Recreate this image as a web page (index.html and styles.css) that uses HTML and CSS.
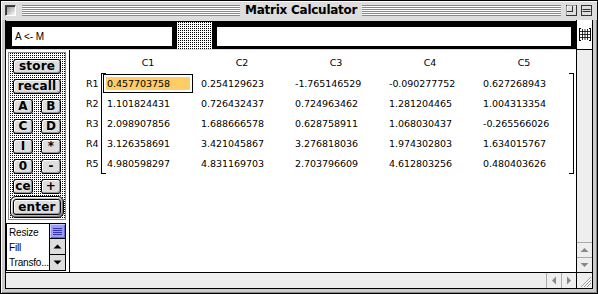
FILE: index.html
```html
<!DOCTYPE html>
<html>
<head>
<meta charset="utf-8">
<link rel="stylesheet" href="styles.css">
</head>
<body>
<div class="window">
  <div class="titlebar">
    <span class="closebox"></span>
    <span class="stripes stripes-left"></span>
    <span class="title">Matrix Calculator</span>
    <span class="stripes stripes-right"></span>
    <svg class="wbox" width="11" height="11" viewBox="0 0 11 11"><rect x="0.5" y="0.5" width="10" height="10" fill="#ddd" stroke="#333"/><path d="M1 1h9M1 1v9" stroke="#fff"/><path d="M6.5 1v6M1 6.5h6" stroke="#333"/></svg>
    <svg class="wbox wbox-last" width="11" height="11" viewBox="0 0 11 11"><rect x="0.5" y="0.5" width="10" height="10" fill="#ddd" stroke="#333"/><path d="M1.5 4.5h8M1.5 6.5h8" stroke="#333"/></svg>
  </div>
  <div class="body">
    <div class="topbar">
      <div class="field field-cmd">A &lt;- M</div>
      <div class="sep"></div>
      <div class="field field-out"></div>
    </div>
    <div class="iconcell">
      <svg width="12" height="13" viewBox="0 0 12 13"><path d="M0.5 0v13M11.5 0v13M0 0.5h2M0 12.5h2M10 0.5h2M10 12.5h2" stroke="#000"/><path d="M3.5 1v11M6 1v11M8.5 1v11M1 3.5h10M1 6.5h10M1 9.5h10" stroke="#000" stroke-width="0.8"/></svg>
    </div>
    <div class="left">
      <div class="keys">
        <div class="key">store</div>
        <div class="key">recall</div>
        <div class="pair"><div class="key small">A</div><div class="key small">B</div></div>
        <div class="pair"><div class="key small">C</div><div class="key small">D</div></div>
        <div class="pair"><div class="key small">I</div><div class="key small">*</div></div>
        <div class="pair"><div class="key small">0</div><div class="key small">-</div></div>
        <div class="pair"><div class="key small">ce</div><div class="key small">+</div></div>
        <div class="ring"><div class="key key-enter">enter</div></div>
      </div>
      <div class="list">
        <div class="items">
          <div class="item">Resize</div>
          <div class="item">Fill</div>
          <div class="item">Transfo...</div>
        </div>
        <div class="lscroll">
          <div class="thumb"><svg width="9" height="9" viewBox="0 0 9 9"><path d="M0 1.5h9M0 3.5h9M0 5.5h9M0 7.5h9" stroke="#3333aa"/></svg></div>
          <div class="larrow"><svg width="9" height="5" viewBox="0 0 9 5"><polygon points="0.5,4.5 8.5,4.5 4.5,0.5" fill="#000"/></svg></div>
          <div class="larrow"><svg width="9" height="5" viewBox="0 0 9 5"><polygon points="0.5,0.5 8.5,0.5 4.5,4.5" fill="#000"/></svg></div>
        </div>
      </div>
    </div>
    <div class="matrix">
      <div class="hdr">
        <span>C1</span><span>C2</span><span>C3</span><span>C4</span><span>C5</span>
      </div>
      <div class="mrow">
        <div class="labels">
          <div>R1</div><div>R2</div><div>R3</div><div>R4</div><div>R5</div>
        </div>
        <div class="bracket">
          <div class="cell sel"><div class="hl"><span>0.457703758</span></div></div>
          <div class="cell">0.254129623</div>
          <div class="cell">-1.765146529</div>
          <div class="cell">-0.090277752</div>
          <div class="cell">0.627268943</div>
          <div class="cell">1.101824431</div>
          <div class="cell">0.726432437</div>
          <div class="cell">0.724963462</div>
          <div class="cell">1.281204465</div>
          <div class="cell">1.004313354</div>
          <div class="cell">2.098907856</div>
          <div class="cell">1.688666578</div>
          <div class="cell">0.628758911</div>
          <div class="cell">1.068030437</div>
          <div class="cell">-0.265566026</div>
          <div class="cell">3.126358691</div>
          <div class="cell">3.421045867</div>
          <div class="cell">3.276818036</div>
          <div class="cell">1.974302803</div>
          <div class="cell">1.634015767</div>
          <div class="cell">4.980598297</div>
          <div class="cell">4.831169703</div>
          <div class="cell">2.703796609</div>
          <div class="cell">4.612803256</div>
          <div class="cell">0.480403626</div>
        </div>
      </div>
    </div>
    <div class="vscroll">
      <div class="track"></div>
      <div class="sarrow"><svg width="15" height="14" viewBox="0 0 15 14"><polygon points="3.5,9 11.5,9 7.5,5" fill="#888"/></svg></div>
      <div class="sarrow"><svg width="15" height="14" viewBox="0 0 15 14"><polygon points="3.5,5 11.5,5 7.5,9" fill="#888"/></svg></div>
    </div>
    <div class="hscroll">
      <div class="track"></div>
      <div class="harrow"><svg width="14" height="15" viewBox="0 0 14 15"><polygon points="9,3.5 9,11.5 5,7.5" fill="#888"/></svg></div>
      <div class="harrow"><svg width="14" height="15" viewBox="0 0 14 15"><polygon points="5,3.5 5,11.5 9,7.5" fill="#888"/></svg></div>
    </div>
    <div class="grow">
      <svg width="15" height="15" viewBox="0 0 15 15"><path d="M4 14L14 4M7 14L14 7M10 14L14 10" stroke="#999"/><path d="M5 14L14 5M8 14L14 8M11 14L14 11" stroke="#fff"/></svg>
    </div>
  </div>
</div>
</body>
</html>
```

FILE: styles.css
```css
html, body {
  margin: 0;
  padding: 0;
  background: #fff;
}

.window {
  width: 598px;
  height: 294px;
  box-sizing: border-box;
  border: 1px solid #000;
  background: #ccc;
  box-shadow: inset 1px 1px #fff, inset -1px -1px #888;
  display: flex;
  flex-direction: column;
  font-family: "DejaVu Sans", sans-serif;
  color: #000;
}

/* ---------- title bar ---------- */
.titlebar {
  height: 19px;
  flex: none;
  display: flex;
  align-items: center;
  padding: 0 5px 0 4px;
  background: #ddd;
  box-shadow: inset 0 1px #fff, inset 1px 0 #fff;
}

.closebox {
  width: 11px;
  height: 11px;
  box-sizing: border-box;
  border: 1px solid #444;
  border-right-color: #fff;
  border-bottom-color: #fff;
  background: linear-gradient(135deg, #888 0%, #bbb 45%, #fff 100%);
  box-shadow: inset 1px 1px #333;
  flex: none;
}

.stripes {
  height: 11px;
  background: repeating-linear-gradient(to bottom, #888 0 1px, #fff 1px 2px);
}

.stripes-left {
  width: 218px;
  margin-left: 6px;
  flex: none;
}

.stripes-right {
  flex: 1;
  margin-right: 5px;
}

.title {
  font-weight: bold;
  font-size: 12px;
  letter-spacing: -0.25px;
  padding: 0 5px;
  white-space: nowrap;
  line-height: 19px;
}

.wbox {
  display: block;
  flex: none;
}

.wbox-last {
  margin-left: 4px;
}

/* ---------- body grid ---------- */
.body {
  flex: 1;
  margin: 0 4px 4px;
  border: 1px solid #000;
  border-top: 0;
  display: grid;
  grid-template-columns: 64px 506px 16px;
  grid-template-rows: 30px 222px 16px;
  background: #fff;
}

.topbar {
  grid-column: 1 / 3;
  grid-row: 1;
  display: flex;
  box-sizing: border-box;
  background: #000;
  border-top: 1px solid #ddd;
  border-bottom: 1px solid #ddd;
}

.field {
  height: 19px;
  margin-top: 6px;
  background: #fff;
  box-sizing: border-box;
  font-family: "Liberation Sans", sans-serif;
  font-size: 10px;
  line-height: 19px;
  padding-left: 3px;
  color: #000;
}

.field-cmd {
  width: 160px;
  margin-left: 6px;
  margin-right: 5px;
}

.field-out {
  width: 354px;
  margin-left: 5px;
}

.sep {
  width: 35px;
  margin-top: 1px;
  background-color: #fff;
  background-image: conic-gradient(#000 0 25%, transparent 0);
  background-size: 2px 2px;
}

.iconcell {
  grid-column: 3;
  grid-row: 1;
  box-sizing: border-box;
  border-left: 1px solid #000;
  border-bottom: 1px solid #000;
  background: #fff;
  display: flex;
  justify-content: center;
  padding-top: 8px;
}

.iconcell svg {
  display: block;
}

/* ---------- left panel ---------- */
.left {
  grid-column: 1;
  grid-row: 2;
  border-right: 1px solid #000;
  background: #fff;
  display: flex;
  flex-direction: column;
}

.keys {
  margin: 2px 3px 0 2px;
  height: 168px;
  box-sizing: border-box;
  border: 1px solid #888;
  padding: 6px 4px 1px;
  background-color: #fff;
  background-image: conic-gradient(#000 0 25%, transparent 0);
  background-size: 2px 2px;
  display: flex;
  flex-direction: column;
  gap: 5px;
}

.key {
  height: 15px;
  box-sizing: border-box;
  border: 1px solid #000;
  border-radius: 3px;
  background: #ddd;
  box-shadow: inset 1px 1px #fff, inset -1px -1px #999;
  font-weight: bold;
  font-size: 12px;
  line-height: 13px;
  text-align: center;
  letter-spacing: 0.2px;
  color: #000;
}

.pair {
  display: flex;
  justify-content: space-between;
}

.key.small {
  width: 20px;
}

.ring {
  margin: -3px 0 0 -3px;
  width: 54px;
  height: 22px;
  box-sizing: border-box;
  border: 1px solid #000;
  border-radius: 6px;
  background: #bbb;
  box-shadow: inset 1px 1px #fff, inset -1px -1px #777;
  padding: 2px;
}

.key-enter {
  height: 16px;
  line-height: 14px;
}

.list {
  margin-top: 3px;
  width: 60px;
  height: 48px;
  box-sizing: border-box;
  border: 1px solid #000;
  display: flex;
  background: #fff;
}

.items {
  flex: 1;
  font-family: "Liberation Sans", sans-serif;
  font-size: 10px;
  line-height: 15px;
  padding: 1px 0 0 2px;
  overflow: hidden;
  white-space: nowrap;
  letter-spacing: -0.2px;
  color: #000;
}

.item {
  color: #000;
}

.lscroll {
  width: 15px;
  border-left: 1px solid #000;
  display: flex;
  flex-direction: column;
}

.thumb {
  height: 14px;
  background: #9c9cff;
  box-shadow: inset 1px 1px #ccf, inset -1px -1px #66c;
  display: flex;
  align-items: center;
  justify-content: center;
}

.thumb svg, .larrow svg, .sarrow svg, .harrow svg, .grow svg {
  display: block;
}

.larrow {
  flex: 1;
  border-top: 1px solid #000;
  background: #ddd;
  display: flex;
  align-items: center;
  justify-content: center;
}

/* ---------- matrix ---------- */
.matrix {
  grid-column: 2;
  grid-row: 2;
  padding: 6px 0 0 16px;
  font-size: 9.5px;
  color: #000;
}

.hdr {
  display: grid;
  grid-template-columns: repeat(5, 94px);
  margin-left: 17px;
  line-height: 14px;
}

.hdr span {
  text-align: center;
  padding-right: 4px;
}

.mrow {
  display: flex;
  margin-top: 3px;
}

.labels {
  width: 15px;
  padding-top: 1px;
  line-height: 20px;
}

.bracket {
  border-left: 1px solid #000;
  border-right: 1px solid #000;
  padding: 1px 0 0 1px;
  display: grid;
  grid-template-columns: repeat(5, 94px);
  grid-auto-rows: 20px;
  background:
    linear-gradient(#000, #000) left top / 4px 1px no-repeat,
    linear-gradient(#000, #000) left bottom / 4px 1px no-repeat,
    linear-gradient(#000, #000) right top / 4px 1px no-repeat,
    linear-gradient(#000, #000) right bottom / 4px 1px no-repeat;
}

.cell {
  padding-left: 4px;
  line-height: 20px;
  white-space: nowrap;
  letter-spacing: -0.05px;
}

.cell.sel {
  padding: 0;
}

.hl {
  margin-right: 4px;
  height: 19px;
  box-sizing: border-box;
  border: 1px solid #000;
  padding: 2px;
}

.hl span {
  display: block;
  background: #fc6;
  line-height: 13px;
  padding-left: 1px;
}

/* ---------- scroll bars ---------- */
.vscroll {
  grid-column: 3;
  grid-row: 2;
  border-left: 1px solid #000;
  background: #eee;
  display: flex;
  flex-direction: column;
}

.track {
  flex: 1;
}

.sarrow {
  height: 14px;
  border-top: 1px solid #aaa;
}

.hscroll {
  grid-column: 1 / 3;
  grid-row: 3;
  border-top: 1px solid #000;
  background: #eee;
  display: flex;
}

.harrow {
  width: 14px;
  border-left: 1px solid #aaa;
}

.grow {
  grid-column: 3;
  grid-row: 3;
  border-top: 1px solid #000;
  border-left: 1px solid #000;
  background: #eee;
}
```
